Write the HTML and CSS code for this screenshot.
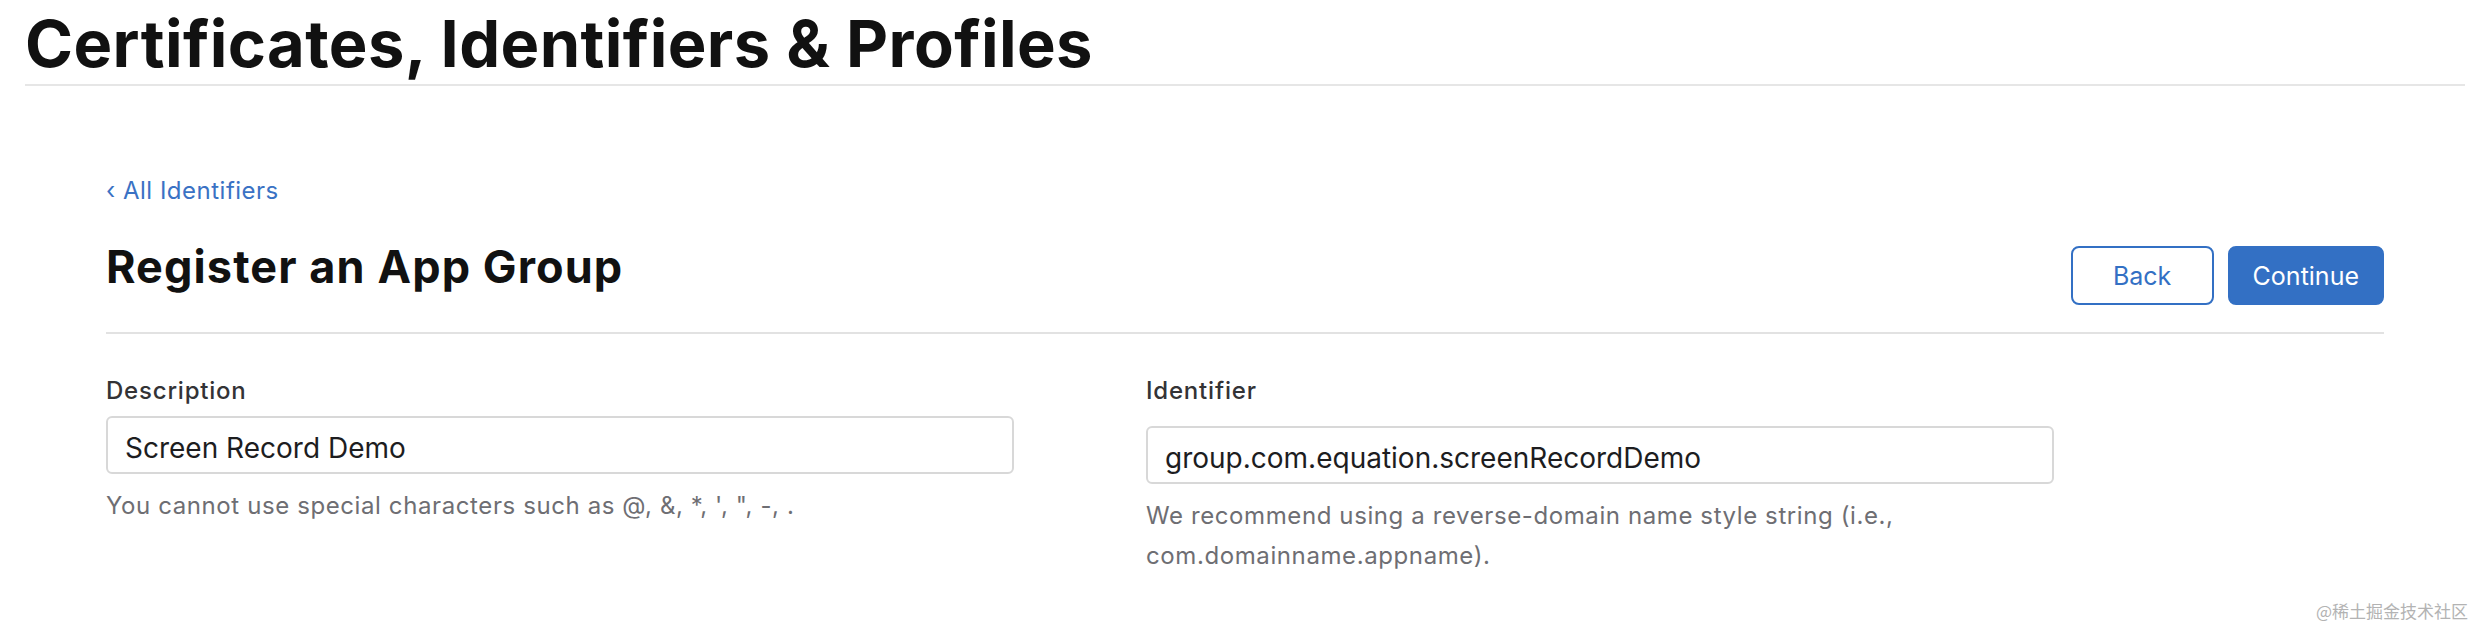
FILE: index.html
```html
<!DOCTYPE html>
<html lang="en">
<head>
<meta charset="utf-8">
<title>Certificates, Identifiers &amp; Profiles</title>
<link rel="stylesheet" href="styles.css">
</head>
<body>
<div class="page">
  <header class="page-header">
    <h1 class="page-title">Certificates, Identifiers &amp; Profiles</h1>
  </header>
  <main class="content">
    <a class="back-link" href="#">‹ All Identifiers</a>
    <div class="title-row">
      <h2 class="section-title">Register an App Group</h2>
      <div class="actions">
        <button class="btn btn-secondary" type="button">Back</button>
        <button class="btn btn-primary" type="button">Continue</button>
      </div>
    </div>
    <div class="form-grid">
      <div class="field">
        <label class="field-label" for="desc">Description</label>
        <input class="field-input" id="desc" type="text" value="Screen Record Demo">
        <p class="field-help">You cannot use special characters such as @, &amp;, *, ', ", -, .</p>
      </div>
      <div class="field field-identifier">
        <label class="field-label" for="ident">Identifier</label>
        <input class="field-input" id="ident" type="text" value="group.com.equation.screenRecordDemo">
        <p class="field-help">We recommend using a reverse-domain name style string (i.e., com.domainname.appname).</p>
      </div>
    </div>
  </main>
  <div class="watermark">@稀土掘金技术社区</div>
</div>
</body>
</html>
```

FILE: styles.css
```css
html, body {
  margin: 0;
  padding: 0;
  background: #ffffff;
}

body {
  font-family: Inter, "Noto Sans", "Liberation Sans", sans-serif;
  color: #1d1d1f;
  width: 2476px;
  height: 628px;
  overflow: hidden;
}

.page {
  position: relative;
  height: 628px;
}

.page-header {
  margin-left: 25px;
  width: 2440px;
  padding-top: 5px;
  padding-bottom: 1px;
  border-bottom: 2px solid #e6e6e6;
}

.page-title {
  margin: 0;
  font-size: 65px;
  line-height: 78px;
  font-weight: 700;
  letter-spacing: 0.4px;
  color: #111111;
}

.content {
  margin-left: 106px;
  width: 2278px;
}

.back-link {
  display: block;
  margin-top: 89px;
  font-size: 24px;
  line-height: 32px;
  letter-spacing: 0.5px;
  color: #3a72c4;
  text-decoration: none;
}

.title-row {
  display: flex;
  justify-content: space-between;
  align-items: flex-start;
  margin-top: 32px;
  padding-bottom: 27px;
  border-bottom: 2px solid #e2e2e2;
}

.section-title {
  margin: 0;
  font-size: 45px;
  line-height: 56px;
  font-weight: 700;
  letter-spacing: 1.1px;
  color: #111111;
}

.actions {
  display: flex;
  gap: 14px;
  margin-top: 7px;
}

.btn {
  box-sizing: border-box;
  height: 59px;
  min-width: 143px;
  padding: 0 23px;
  border-radius: 8px;
  font-family: Inter, "Noto Sans", "Liberation Sans", sans-serif;
  font-size: 25px;
  font-weight: 400;
  cursor: pointer;
}

.btn-secondary {
  background: #ffffff;
  color: #3370c4;
  border: 2px solid #3370c4;
}

.btn-primary {
  background: #3370c4;
  color: #ffffff;
  border: 2px solid #3370c4;
}

.form-grid {
  display: grid;
  grid-template-columns: 1040px 1fr;
  margin-top: 42px;
}

.field {
  display: flex;
  flex-direction: column;
  align-items: flex-start;
}

.field-label {
  font-size: 24px;
  line-height: 30px;
  font-weight: 500;
  letter-spacing: 0.8px;
  color: #333336;
}

.field-input {
  box-sizing: border-box;
  width: 908px;
  height: 58px;
  margin: 10px 0 0;
  padding: 5px 17px 0;
  border: 2px solid #d8d8d8;
  border-radius: 6px;
  font-family: Inter, "Noto Sans", "Liberation Sans", sans-serif;
  font-size: 28px;
  color: #1d1d1f;
  background: #ffffff;
  outline: none;
}

.field-identifier .field-input {
  margin-top: 20px;
}

.field-help {
  width: 908px;
  margin: 12px 0 0;
  font-size: 24px;
  line-height: 40px;
  letter-spacing: 0.6px;
  color: #6e6e73;
}

.watermark {
  position: absolute;
  right: 8px;
  bottom: 5px;
  font-family: "Noto Sans CJK SC", sans-serif;
  font-size: 17px;
  line-height: 24px;
  color: #b3b3b3;
}
```
